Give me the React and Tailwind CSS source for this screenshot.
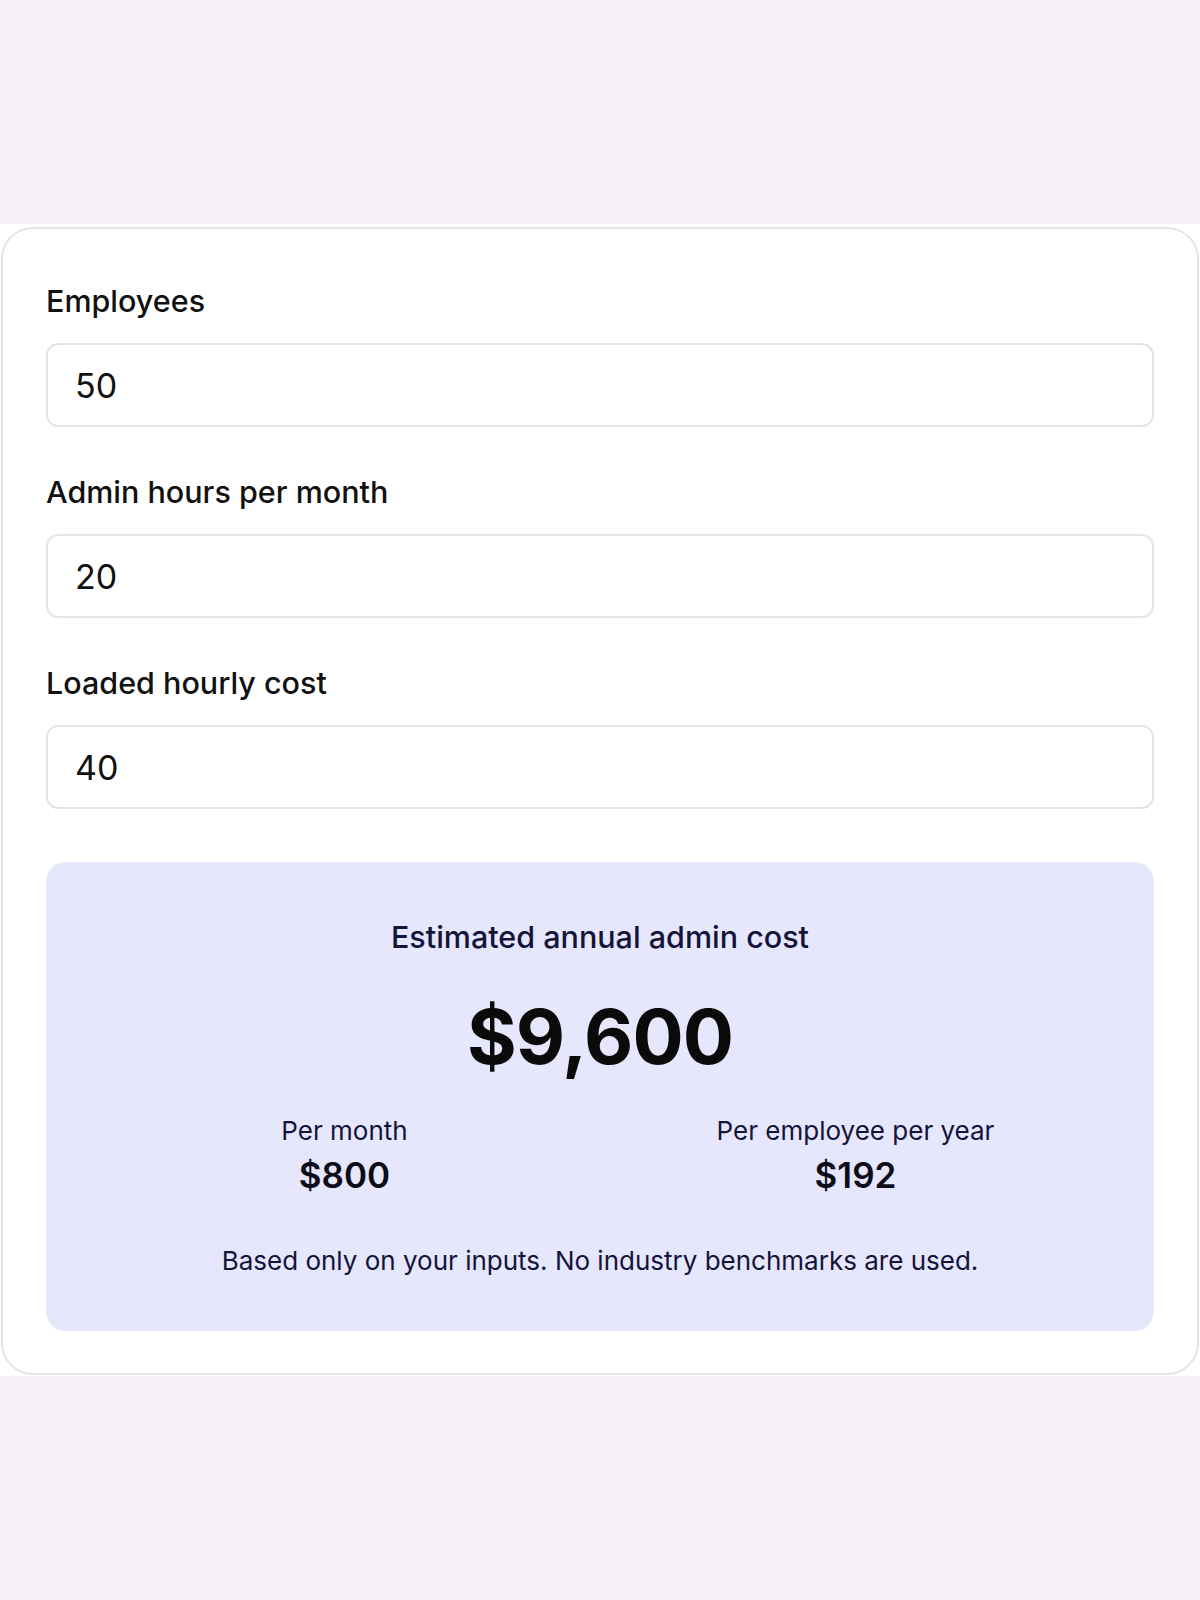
export default function App() {
  const fields = [
    { label: 'Employees', value: '50' },
    { label: 'Admin hours per month', value: '20' },
    { label: 'Loaded hourly cost', value: '40' },
  ];

  return (
    <div
      className="min-h-[1600px] bg-[#f5f0f8] pt-[224px]"
      style={{ fontFamily: 'Inter, "Noto Sans", sans-serif' }}
    >
      <div className="bg-white px-[1px] pt-[3px] pb-[1px]">
        <div className="rounded-[32px] border-2 border-[#e9e2ea] bg-white px-[43px] pt-[54px] pb-[42px]">
          {fields.map((f, i) => (
            <div key={f.label} className={i > 0 ? 'mt-[47px]' : ''}>
              <label className="block text-[30.5px] leading-[36px] font-medium text-[#111111]">
                {f.label}
              </label>
              <input
                type="text"
                defaultValue={f.value}
                className="mt-[24px] block h-[84px] w-full rounded-[12px] border-2 border-[#e5e5e5] bg-white pl-[27px] text-[34px] text-[#111111] outline-none"
              />
            </div>
          ))}

          <div className="mt-[53px] rounded-[20px] bg-[#e6e6fd] px-[43px] pt-[57px] pb-[55px] text-center text-[#14143a]">
            <p className="text-[30.5px] leading-[36px] font-medium">Estimated annual admin cost</p>
            <p className="mt-[43px] text-[76px] leading-none font-bold tracking-[-1px] text-[#0a0a0a]">
              $9,600
            </p>
            <div className="mt-[42px] grid grid-cols-2">
              <div>
                <p className="text-[26px] leading-[30px]">Per month</p>
                <p className="mt-[9px] text-[35px] leading-[40px] font-semibold text-[#0d0d1a]">$800</p>
              </div>
              <div>
                <p className="text-[26px] leading-[30px]">Per employee per year</p>
                <p className="mt-[9px] text-[35px] leading-[40px] font-semibold text-[#0d0d1a]">$192</p>
              </div>
            </div>
            <p className="mt-[51px] text-[26px] leading-[30px]">
              Based only on your inputs. No industry benchmarks are used.
            </p>
          </div>
        </div>
      </div>
    </div>
  );
}
